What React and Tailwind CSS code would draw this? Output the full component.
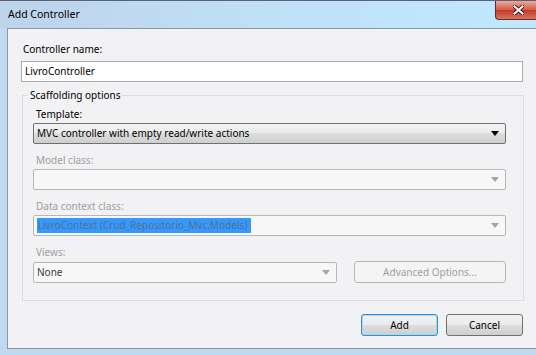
const font = { fontFamily: '"Noto Sans", "Open Sans", sans-serif' };

const Arrow = ({ color }) => (
  <svg width="8" height="5" viewBox="0 0 8 5" className="shrink-0">
    <polygon points="0,0 8,0 4,5" fill={color} />
  </svg>
);

const ComboBox = ({ children, active, className = '' }) => (
  <div
    className={`flex h-[21px] items-center justify-between rounded-[2px] border pl-[3px] pr-[6px] ${
      active
        ? 'border-[#707070] bg-[linear-gradient(to_bottom,#f2f2f2_0%,#ebebeb_50%,#dddddd_50%,#cfcfcf_100%)]'
        : 'border-[#b5b8bb] bg-[#f7f7f7]'
    } ${className}`}
  >
    <div className="flex min-w-0 items-center">{children}</div>
    <Arrow color={active ? '#000000' : '#a6a6a6'} />
  </div>
);

const Label = ({ children, disabled, className = '' }) => (
  <div className={`ml-[3px] h-4 leading-4 ${disabled ? 'text-[#a0a0a0]' : 'text-black'} ${className}`}>
    {children}
  </div>
);

const DialogButton = ({ children, focused }) => (
  <button
    className={`flex h-[22px] w-[77px] items-center justify-center rounded-[3px] border text-black ${
      focused
        ? 'border-[#3c8cc8] bg-[linear-gradient(to_bottom,#f2f2f2_0%,#ebebeb_50%,#dddddd_50%,#cfcfcf_100%)] shadow-[inset_0_0_0_1px_#9fdaf8]'
        : 'border-[#707070] bg-[linear-gradient(to_bottom,#f2f2f2_0%,#ebebeb_50%,#dddddd_50%,#cfcfcf_100%)]'
    }`}
  >
    {children}
  </button>
);

export default function App() {
  return (
    <div className="flex h-[355px] w-[536px] flex-col overflow-hidden bg-[#c0d8f0] text-[10px]" style={font}>
      {/* title bar */}
      <div className="relative flex h-[28px] shrink-0 items-center border-t border-[#5a6470] bg-[linear-gradient(to_right,#bdd3ea,#c0e0f8_50%,#bfe8ff)] pl-[8px]">
        <span className="text-[10.5px] text-black">Add Controller</span>
        <div className="absolute right-[-8px] top-0 flex h-[19px] w-[49px] items-center justify-center rounded-b-[4px] border border-t-0 border-[#6b2a22] bg-[linear-gradient(to_bottom,#e9a99b,#d45b47_50%,#c23a27_51%,#d9735f)] pr-[2px]">
          <svg width="11" height="10" viewBox="0 0 11 10">
            <path d="M1.5 1.5 L9.5 8.5 M9.5 1.5 L1.5 8.5" stroke="#4a1a14" strokeWidth="4" strokeLinecap="square" />
            <path d="M1.5 1.5 L9.5 8.5 M9.5 1.5 L1.5 8.5" stroke="#ffffff" strokeWidth="2" strokeLinecap="square" />
          </svg>
        </div>
      </div>

      {/* client area */}
      <div className="ml-[7px] h-[321px] shrink-0 border-l border-t border-b border-[#8a96a4] bg-[#f2f1f3]">
        <div className="ml-[13px] flex w-[502px] flex-col pt-[12px]">
          <div className="ml-[2px] h-4 leading-4 text-black">Controller name:</div>
          <div className="mt-[4px] flex h-[21px] items-center border border-[#abadb3] bg-white pl-[3px] text-black">
            LivroController
          </div>

          <fieldset className="ml-px mt-[5px] w-[502px] border border-[#d5dfe5] pb-[17px] pl-[10px] pr-[17px]">
            <legend className="ml-[-5px] px-[2px] leading-4 text-black">Scaffolding options</legend>

            <Label className="mt-[3px]">Template:</Label>
            <ComboBox active className="mt-px">
              <span className="text-black">MVC controller with empty read/write actions</span>
            </ComboBox>

            <Label disabled className="mt-2">Model class:</Label>
            <ComboBox className="mt-px" />

            <Label disabled className="mt-2">Data context class:</Label>
            <ComboBox className="mt-px">
              <span className="bg-[#3399ff] pl-px pr-[4px] leading-[15px] text-[#5f6f85]">
                LivroContext (Crud_Repositorio_Mvc.Models)
              </span>
            </ComboBox>

            <Label disabled className="mt-2">Views:</Label>
            <div className="mt-px flex items-center gap-[17px]">
              <ComboBox className="w-[304px]">
                <span className="text-[#3a3a3a]">None</span>
              </ComboBox>
              <div className="flex h-[22px] w-[152px] items-center justify-center rounded-[3px] border border-[#b5b8bb] bg-[#f4f4f4] text-[#a0a0a0]">
                Advanced Options...
              </div>
            </div>
          </fieldset>

          <div className="mt-[13px] flex justify-end gap-[8px]">
            <DialogButton focused>Add</DialogButton>
            <DialogButton>Cancel</DialogButton>
          </div>
        </div>
      </div>
    </div>
  );
}
